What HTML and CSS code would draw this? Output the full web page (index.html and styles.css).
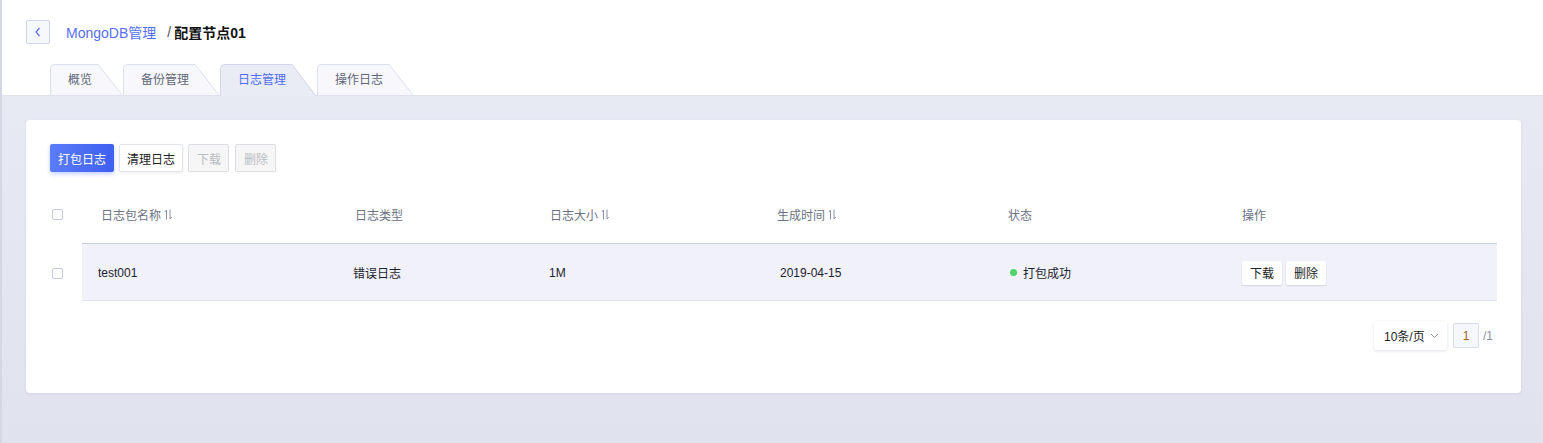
FILE: index.html
```html
<!DOCTYPE html>
<html lang="zh">
<head>
<meta charset="utf-8">
<title>配置节点01</title>
<link rel="stylesheet" href="styles.css">
</head>
<body>
<div class="page">
  <header class="header">
    <div class="crumbs">
      <button class="back" type="button" aria-label="返回">
        <svg width="8" height="10" viewBox="0 0 8 10"><path d="M5.5 1L2 5l3.5 4" fill="none" stroke="#5572f3" stroke-width="1.2"/></svg>
      </button>
      <span class="crumb-link">MongoDB管理</span>
      <span class="crumb-sep">/</span>
      <span class="crumb-cur">配置节点01</span>
    </div>
    <nav class="tabs">
      <div class="tab"><span class="tab-body">概览</span><svg class="slant" viewBox="0 0 24 31" preserveAspectRatio="none"><polygon points="0,0 24,31 0,31" class="slant-fill"/><line x1="0" y1="0.5" x2="24" y2="31" class="slant-line"/></svg></div>
      <div class="tab"><span class="tab-body">备份管理</span><svg class="slant" viewBox="0 0 24 31" preserveAspectRatio="none"><polygon points="0,0 24,31 0,31" class="slant-fill"/><line x1="0" y1="0.5" x2="24" y2="31" class="slant-line"/></svg></div>
      <div class="tab active"><span class="tab-body">日志管理</span><svg class="slant" viewBox="0 0 24 31" preserveAspectRatio="none"><polygon points="0,0 24,31 0,31" class="slant-fill"/><line x1="0" y1="0.5" x2="24" y2="31" class="slant-line"/></svg></div>
      <div class="tab"><span class="tab-body">操作日志</span><svg class="slant" viewBox="0 0 24 31" preserveAspectRatio="none"><polygon points="0,0 24,31 0,31" class="slant-fill"/><line x1="0" y1="0.5" x2="24" y2="31" class="slant-line"/></svg></div>
    </nav>
  </header>
  <main class="content">
    <section class="card">
      <div class="toolbar">
        <button class="btn btn-primary" type="button">打包日志</button>
        <button class="btn btn-default" type="button">清理日志</button>
        <button class="btn btn-disabled" type="button">下载</button>
        <button class="btn btn-disabled" type="button">删除</button>
      </div>
      <div class="table">
        <div class="row head">
          <div class="cell cb"><span class="checkbox"></span></div>
          <div class="cell c1">日志包名称<svg class="sort" width="9" height="11" viewBox="0 0 9 11"><path d="M2.5 10.5V1L0.8 3M6 0.5V10l1.7-2" fill="none" stroke="#8a91a5" stroke-width="1"/></svg></div>
          <div class="cell c2">日志类型</div>
          <div class="cell c3">日志大小<svg class="sort" width="9" height="11" viewBox="0 0 9 11"><path d="M2.5 10.5V1L0.8 3M6 0.5V10l1.7-2" fill="none" stroke="#8a91a5" stroke-width="1"/></svg></div>
          <div class="cell c4">生成时间<svg class="sort" width="9" height="11" viewBox="0 0 9 11"><path d="M2.5 10.5V1L0.8 3M6 0.5V10l1.7-2" fill="none" stroke="#8a91a5" stroke-width="1"/></svg></div>
          <div class="cell c5">状态</div>
          <div class="cell c6">操作</div>
        </div>
        <div class="row data">
          <div class="cell cb"><span class="checkbox"></span></div>
          <div class="cell c1">test001</div>
          <div class="cell c2">错误日志</div>
          <div class="cell c3">1M</div>
          <div class="cell c4">2019-04-15</div>
          <div class="cell c5"><span class="dot"></span>打包成功</div>
          <div class="cell c6"><button class="btn-op" type="button">下载</button><button class="btn-op" type="button">删除</button></div>
        </div>
      </div>
      <div class="pager">
        <div class="select">10条/页<svg width="9" height="6" viewBox="0 0 9 6"><path d="M1 1l3.5 3.5L8 1" fill="none" stroke="#8a91a5" stroke-width="1"/></svg></div>
        <span class="page-input">1</span>
        <span class="page-total">/1</span>
      </div>
    </section>
  </main>
</div>
</body>
</html>
```
FILE: styles.css
```css
* { box-sizing: border-box; }
html, body { margin: 0; padding: 0; }
body {
  font-family: "Liberation Sans", "Noto Sans CJK SC", sans-serif;
  font-size: 12px;
  color: #222;
}
.page {
  min-height: 443px;
  border-left: 2px solid #d3d7e7;
  display: flex;
  flex-direction: column;
  background: linear-gradient(#e9ebf5, #e0e2ee);
}
.header {
  background: #fff;
  border-bottom: 1px solid #dfe1ee;
  padding: 20px 0 0 24px;
}
.crumbs {
  display: flex;
  align-items: center;
  height: 24px;
  font-size: 14px;
}
.back {
  width: 24px;
  height: 24px;
  padding: 0;
  border: 1px solid #cfd3ea;
  border-radius: 2px;
  background: #f7f8fd;
  display: flex;
  align-items: center;
  justify-content: center;
  margin-right: 16px;
}
.crumb-link { color: #5570f4; }
.crumb-sep { color: #555; margin: 0 3px 0 11px; }
.crumb-cur { font-weight: bold; color: #111; }
.tabs {
  display: flex;
  align-items: flex-start;
  gap: 1px;
  margin: 20px 0 0 24px;
}
.tab {
  display: flex;
  height: 31px;
}
.tab-body {
  display: block;
  padding: 0 6px 0 17px;
  line-height: 30px;
  border-top: 1px solid #dcdfef;
  border-left: 1px solid #dcdfef;
  border-top-left-radius: 5px;
  background: #f8f8fc;
  color: #5f6677;
}
.slant { width: 24px; height: 100%; display: block; }
.slant-fill { fill: #f8f8fc; }
.slant-line { stroke: #dcdfef; stroke-width: 1; vector-effect: non-scaling-stroke; }
.tab.active { height: 32px; margin-bottom: -1px; }
.tab.active .tab-body { background: #e9ebf5; border-color: #d2d6ea; color: #4e6ef2; }
.tab.active .slant-fill { fill: #e9ebf5; }
.tab.active .slant-line { stroke: #d2d6ea; }

.content {
  flex: 1;
  padding: 24px 22px 50px 24px;
}
.card {
  background: #fff;
  border-radius: 4px;
  box-shadow: 0 1px 3px rgba(60, 70, 120, 0.08);
  padding: 24px 24px 43px 24px;
}
.toolbar { display: flex; gap: 5px; }
.btn {
  height: 28px;
  padding: 0 8px;
  font: inherit;
  font-size: 12px;
  border-radius: 2px;
}
.btn-primary {
  background: linear-gradient(90deg, #5b7cf8, #3f60f0);
  border: none;
  color: #fff;
  padding: 0 8px;
  box-shadow: 0 2px 4px rgba(63, 96, 240, 0.3);
}
.btn-default {
  background: #fff;
  border: 1px solid #e3e5ee;
  color: #222;
  padding: 0 7px;
  box-shadow: 0 1px 3px rgba(0, 0, 0, 0.08);
}
.btn-disabled {
  background: #f6f6f7;
  border: 1px solid #dcdde2;
  color: #b9bbc2;
  padding: 0 7px 0 8px;
}
.btn-disabled + .btn-disabled { margin-left: 1px; }
.table { margin-top: 13px; }
.row {
  display: grid;
  grid-template-columns: 32px 271px 196px 229px 230px 234px 1fr;
}
.cell {
  display: flex;
  align-items: center;
}
.row.head .cell { height: 59px; color: #6b7284; }
.row.head .cell:not(.cb) { border-bottom: 1px solid #c9cde0; }
.row.head .c1 { padding-left: 19px; }
.row.head .c2 { padding-left: 2px; }
.row.head .c3 { padding-left: 1px; }
.row.head .c4 { padding-left: 0; margin-left: -1px; }
.row.data .cell { height: 57px; color: #1d2230; padding-top: 1px; }
.row.data .cell:not(.cb) { background: #f0f1f9; border-bottom: 1px solid #e1e3ee; }
.row.data .c1 { padding-left: 16px; }
.row.data .c4 { padding-left: 2px; }
.row.data .c5 { padding-left: 2px; }
.row .c6 { padding-left: 0; }
.cb { padding-left: 2px; }
.checkbox {
  width: 11px;
  height: 11px;
  border: 1px solid #c6cadf;
  border-radius: 2px;
  background: #fff;
}
.sort { margin-left: 3px; }
.dot {
  width: 7px;
  height: 7px;
  border-radius: 50%;
  background: #4fd468;
  margin-right: 6px;
}
.btn-op {
  height: 24px;
  width: 40px;
  padding: 0;
  margin-right: 4px;
  border: none;
  background: #fff;
  border-radius: 2px;
  font: inherit;
  font-size: 12px;
  color: #222;
  box-shadow: 0 1px 2px rgba(0, 0, 0, 0.12);
}
.pager {
  display: flex;
  justify-content: flex-end;
  align-items: center;
  margin-top: 20px;
  padding-right: 4px;
}
.select {
  height: 29px;
  width: 73px;
  padding-left: 10px;
  display: flex;
  align-items: center;
  gap: 5px;
  background: #fff;
  border-radius: 2px;
  box-shadow: 0 1px 3px rgba(40, 50, 100, 0.15);
  color: #222;
}
.page-input {
  width: 26px;
  height: 25px;
  margin-left: 6px;
  display: flex;
  align-items: center;
  justify-content: center;
  background: #f6f7fb;
  border: 1px solid #d9dce8;
  border-radius: 2px;
  color: #9a6a1c;
}
.page-total { color: #8a90a4; margin-left: 4px; }
```
